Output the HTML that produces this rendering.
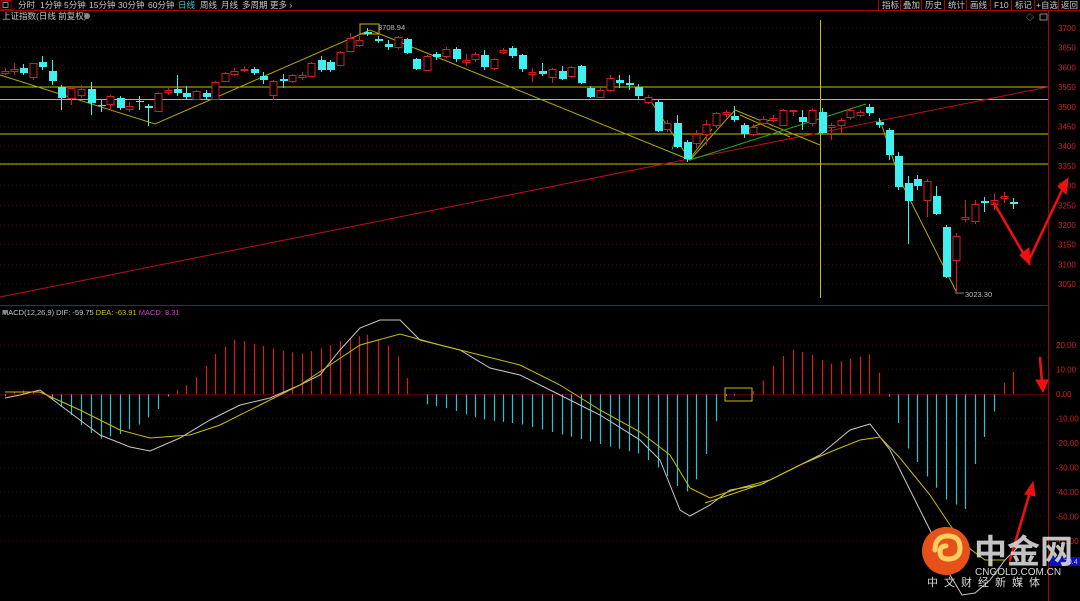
<!DOCTYPE html>
<html><head><meta charset="utf-8">
<style>
html,body{margin:0;padding:0;background:#000;width:1080px;height:601px;overflow:hidden;font-family:"Liberation Sans","Noto Sans CJK SC",sans-serif}
svg{position:absolute;left:0;top:0}
</style></head><body>
<svg id="s" width="1080" height="601" viewBox="0 0 1080 601" xmlns="http://www.w3.org/2000/svg" font-family="Liberation Sans, Noto Sans CJK SC, sans-serif">
<rect width="1080" height="601" fill="#000"/>
<!-- top bar -->
<line x1="0" y1="10.5" x2="1080" y2="10.5" stroke="#a00" stroke-width="1"/>
<rect x="1" y="0.5" width="10" height="9" fill="none" stroke="#a00"/>
<rect x="3" y="2.5" width="5" height="5" fill="none" stroke="#aaa" stroke-width="0.8"/>
<g font-size="8.5" fill="#c8c8c8">
<text x="18" y="8">分时</text><text x="40" y="8">1分钟</text><text x="64" y="8">5分钟</text><text x="89" y="8">15分钟</text><text x="118" y="8">30分钟</text><text x="148" y="8">60分钟</text>
<text x="178" y="8" fill="#33d0e0">日线</text><text x="200" y="8">周线</text><text x="221" y="8">月线</text><text x="242" y="8">多周期</text><text x="270" y="8">更多 ›</text>
<text x="882" y="8">指标</text><text x="903" y="8">叠加</text><text x="925" y="8">历史</text><text x="948" y="8">统计</text><text x="970" y="8">画线</text><text x="994" y="8">F10</text><text x="1015" y="8">标记</text><text x="1036" y="8">+自选</text><text x="1061" y="8">返回</text>
</g>
<g stroke="#a00"><line x1="878.5" y1="0" x2="878.5" y2="10"/><line x1="900.5" y1="0" x2="900.5" y2="10"/><line x1="921.5" y1="0" x2="921.5" y2="10"/><line x1="944.5" y1="0" x2="944.5" y2="10"/><line x1="966.5" y1="0" x2="966.5" y2="10"/><line x1="990.5" y1="0" x2="990.5" y2="10"/><line x1="1011.5" y1="0" x2="1011.5" y2="10"/><line x1="1034.5" y1="0" x2="1034.5" y2="10"/><line x1="1058.5" y1="0" x2="1058.5" y2="10"/></g>
<text x="2" y="19" font-size="8.5" fill="#c8c8c8">上证指数(日线 前复权)</text>
<circle cx="87" cy="16" r="3" fill="#888"/>
<text x="1026" y="20" font-size="8" fill="#aaa">◇</text>
<rect x="1040" y="14" width="7" height="6" fill="none" stroke="#aaa" stroke-width="0.8"/>
<!-- right axis -->
<line x1="1048.5" y1="10" x2="1048.5" y2="601" stroke="#a00"/>
<line x1="0" y1="305.5" x2="1048" y2="305.5" stroke="#a00"/>
<g id="grid"></g>
<g id="axis" font-size="8" fill="#d02020"></g>
<!-- horizontal yellow lines -->
<g stroke="#c8c000" stroke-width="1">
<line x1="0" y1="87" x2="1048" y2="87"/><line x1="0" y1="99.5" x2="1048" y2="99.5"/><line x1="0" y1="134" x2="1048" y2="134"/><line x1="0" y1="164" x2="1048" y2="164"/>
<line x1="820.5" y1="20" x2="820.5" y2="298"/>
</g>
<line x1="0" y1="297" x2="1048" y2="87" stroke="#c01010" stroke-width="1"/>
<g stroke="#b0a800" stroke-width="1" fill="none">
<polyline points="0,75 155,124 370,30 690,160"/>
<polyline points="650,100 690,160 735,110 820,145"/>
<polyline points="740,115 790,137"/><polyline points="745,130 770,120"/>
<polyline points="880,120 900,180 957,293"/>
<polyline points="689,160 712,129"/>
</g>
<line x1="690" y1="160" x2="866" y2="104" stroke="#20b020" stroke-width="1"/>
<line x1="680" y1="125" x2="672" y2="150" stroke="#20b020"/>
<rect x="360" y="24" width="19" height="10" fill="none" stroke="#c8c000"/>
<text x="378" y="30" font-size="7.5" fill="#bbb">3708.94</text>
<text x="965" y="297" font-size="7.5" fill="#bbb">3023.30</text>
<line x1="955" y1="293" x2="964" y2="293" stroke="#bbb" stroke-width="0.7"/>
<g id="candles"></g>
<!-- MACD -->
<text x="2" y="315" font-size="7.5" fill="#c8c8c8">MACD(12,26,9)  DIF: -59.75 <tspan fill="#d0c800">DEA: -63.91</tspan> <tspan fill="#d040d0">MACD: 8.31</tspan></text>
<circle cx="5" cy="312" r="2" fill="#888"/>
<g id="bars"></g>
<line x1="0" y1="394.5" x2="1048" y2="394.5" stroke="#a00" stroke-width="0.6"/>
<rect x="725" y="388" width="27" height="13" fill="none" stroke="#c8c000"/>
<polyline fill="none" stroke="#c8c8c8" stroke-width="1" points="5,398 20,395 40,390 60,405 80,420 100,435 130,447 150,451 180,438 210,420 240,405 270,398 300,385 320,375 340,350 360,328 380,320 400,320 420,340 440,345 460,350 490,368 520,375 560,395 600,415 640,440 660,460 680,510 690,516 710,505 730,490 760,485 790,470 820,455 850,430 870,424 890,450 910,490 930,530 950,575 962,595 975,593 990,580 1005,560 1020,545"/>
<polyline fill="none" stroke="#c8c000" stroke-width="1" points="5,392 40,392 80,410 120,430 150,438 190,435 220,425 260,405 300,385 330,365 360,345 400,334 440,345 480,355 520,365 560,385 600,410 640,432 670,455 690,488 710,498 740,488 770,480 800,465 830,452 860,440 880,437 900,458 930,495 950,525 965,545 985,560 1005,560"/>
<line x1="705" y1="503" x2="765" y2="483" stroke="#c8c000"/>
<!-- red annotation arrows -->
<g fill="#f01010" stroke="#f01010" stroke-width="2.5" stroke-linecap="round">
<line x1="994" y1="203" x2="1026" y2="258"/><line x1="1029" y1="260" x2="1062" y2="190"/>
<polygon points="1020,255 1030,265 1029,248" stroke-width="1"/>
<polygon points="1058,186 1068,178 1066,194" stroke-width="1"/>
<line x1="1040" y1="358" x2="1042" y2="383"/><polygon points="1036,380 1048,380 1043,392" stroke-width="1"/>
<line x1="1010" y1="560" x2="1030" y2="492"/><polygon points="1025,494 1035,496 1033,482" stroke-width="1"/>
</g>
<rect x="1050" y="557" width="30" height="9" fill="#1010c0"/>
<text x="1064" y="564" font-size="7" fill="#ccc">70.4</text>
<!-- logo -->
<circle cx="946" cy="551" r="24" fill="#e8501a"/>
<path d="M935,550 q0,-14 13,-14 q12,0 12,12 q0,11 -12,11 q-8,0 -8,-7 q0,-6 6,-6" fill="none" stroke="#ffd060" stroke-width="5" stroke-linecap="round"/>
<text x="974" y="563" font-size="33" font-weight="bold" fill="#d8d8d8" fill-opacity="0.9">中金网</text>
<text x="975" y="575" font-size="10" fill="#d8d8d8">CNGOLD.COM.CN</text>
<text x="927" y="586" font-size="11" fill="#d8d8d8" letter-spacing="6">中文财经新媒体</text>
</svg>
<script>
var NS="http://www.w3.org/2000/svg";
function el(p,t,a){var e=document.createElementNS(NS,t);for(var k in a)e.setAttribute(k,a[k]);p.appendChild(e);return e;}
var g=document.getElementById('grid'),ax=document.getElementById('axis');
var prices=[3700,3650,3600,3550,3500,3450,3400,3350,3300,3250,3200,3150,3100,3050];
prices.forEach(function(p){var y=28+(3700-p)*0.394;
el(g,'line',{x1:0,y1:y,x2:1048,y2:y,stroke:'#6a0000','stroke-dasharray':'1,3','stroke-width':0.8});
el(ax,'text',{x:1058,y:y+3}).textContent=p;});
[20,10,0,-10,-20,-30,-40,-50,-60].forEach(function(v){var y=394-v*2.45;
if(v!=0)el(g,'line',{x1:0,y1:y,x2:1048,y2:y,stroke:'#6a0000','stroke-dasharray':'1,3','stroke-width':0.8});
el(ax,'text',{x:1056,y:y+3}).textContent=v.toFixed(2);});
// candles: x, top, bottom, high, low, color(r/c)
var C=[[5,71,73,68,75,'r'],[14,69,71,63,75,'r'],[23,68,73,64,75,'c'],[33,63,77,63,80,'r'],[42,62,67,56,70,'c'],[52,71,81,60,85,'c'],[61,87,98,85,110,'c'],[71,88,98,86,105,'r'],[81,89,95,85,98,'r'],[91,89,103,82,115,'c'],[101,105,106,100,112,'c'],[110,96,104,95,110,'r'],[120,98,108,96,110,'c'],[129,106,109,102,112,'r'],[139,101,102,96,110,'c'],[148,106,108,104,126,'c'],[158,93,111,92,112,'r'],[168,90,92,88,95,'r'],[177,89,93,75,96,'c'],[186,93,97,86,99,'c'],[196,91,99,90,100,'r'],[206,93,97,90,100,'c'],[215,82,99,81,100,'r'],[225,73,81,72,82,'r'],[234,71,74,68,76,'r'],[244,69,70,66,72,'r'],[254,69,73,67,75,'c'],[263,76,80,72,84,'c'],[273,81,95,80,100,'r'],[283,79,81,74,88,'c'],[292,75,81,74,83,'r'],[302,75,77,72,80,'r'],[311,63,76,62,77,'r'],[321,60,70,56,72,'c'],[330,62,70,60,72,'c'],[340,52,65,51,66,'r'],[350,38,51,33,52,'r'],[359,40,45,36,47,'r'],[367,32,34,28,36,'c'],[378,39,41,36,43,'c'],[388,44,47,40,50,'c'],[398,37,47,36,49,'r'],[407,39,53,38,54,'c'],[416,59,69,58,70,'c'],[427,56,70,55,71,'r'],[436,54,57,52,60,'c'],[446,49,56,47,58,'r'],[456,49,59,47,62,'c'],[466,60,62,54,66,'r'],[475,54,59,52,62,'r'],[484,55,67,50,70,'c'],[494,59,68,58,70,'r'],[503,50,52,48,54,'r'],[512,48,56,46,58,'c'],[522,55,69,54,72,'c'],[532,72,74,68,82,'r'],[542,71,74,63,76,'c'],[552,69,77,68,83,'r'],[562,71,79,66,80,'c'],[571,67,76,66,78,'r'],[581,66,83,65,84,'c'],[590,88,97,86,98,'c'],[600,90,97,88,98,'r'],[610,78,90,75,92,'r'],[619,80,83,75,88,'c'],[629,83,85,75,90,'c'],[638,87,96,84,99,'c'],[648,97,102,95,104,'r'],[658,102,131,100,132,'c'],[667,123,129,120,132,'r'],[677,123,147,115,148,'c'],[687,142,159,140,162,'c'],[696,134,143,130,148,'r'],[706,124,134,120,145,'r'],[716,113,125,112,128,'r'],[726,112,114,110,118,'r'],[734,116,120,106,122,'c'],[744,125,134,123,138,'c'],[753,127,134,124,136,'r'],[763,119,123,116,126,'r'],[773,118,120,115,122,'r'],[783,110,125,109,126,'r'],[793,110,111,110,116,'r'],[802,117,122,110,130,'c'],[812,110,123,108,126,'r'],[822,112,133,108,134,'c'],[831,125,127,123,140,'r'],[841,120,125,118,135,'r'],[850,110,117,108,120,'r'],[860,112,115,110,117,'r'],[869,107,113,104,116,'c'],[879,122,125,118,128,'c'],[889,130,155,128,160,'c'],[898,156,187,152,190,'c'],[908,183,201,176,244,'c'],[917,179,186,175,190,'c'],[927,181,200,179,217,'r'],[936,196,214,186,215,'c'],[946,227,277,225,278,'c'],[956,236,260,233,293,'r'],[965,217,219,200,222,'r'],[975,204,221,200,224,'r'],[984,201,203,197,212,'c'],[994,200,204,193,210,'r'],[1004,196,198,192,203,'r'],[1013,202,204,198,209,'c']];
var cg=document.getElementById('candles');
C.forEach(function(c){var col=c[5]=='r'?'#d02020':'#40f0f0';var x=c[0];
el(cg,'line',{x1:x+0.5,y1:c[3],x2:x+0.5,y2:c[4],stroke:col,'stroke-width':1});
var h=Math.max(1,c[2]-c[1]);
if(c[5]=='r'){el(cg,'rect',{x:x-3,y:c[1]+0.5,width:7,height:h,fill:'#000',stroke:col,'stroke-width':1});}
else el(cg,'rect',{x:x-3,y:c[1],width:8,height:h,fill:col});});
// MACD histogram envelope (x, value in px offset from 394; negative=up)
var E=[[0,4],[20,-4],[40,-3],[55,8],[70,20],[85,35],[100,45],[120,40],[140,30],[158,15],[170,0],[185,-8],[200,-20],[215,-40],[235,-55],[255,-50],[275,-45],[300,-40],[320,-45],[345,-55],[370,-60],[385,-50],[395,-45],[405,-20],[415,0],[425,10],[450,15],[480,25],[520,30],[560,40],[600,50],[640,60],[660,75],[685,100],[700,80],[715,30],[725,2],[745,1],[758,-5],[770,-25],[790,-45],[810,-40],[830,-30],[850,-35],[870,-40],[882,-15],[890,5],[905,50],[925,80],[945,105],[965,115],[975,70],[985,40],[995,15],[1003,-10],[1013,-22],[1020,-5]];
function env(x){for(var i=0;i<E.length-1;i++){if(x>=E[i][0]&&x<=E[i+1][0]){var t=(x-E[i][0])/(E[i+1][0]-E[i][0]);return E[i][1]+t*(E[i+1][1]-E[i][1]);}}return 0;}
var bg=document.getElementById('bars');
C.forEach(function(c){var x=c[0]+0.5;var v=env(c[0]);if(Math.abs(v)<1.5)return;
el(bg,'line',{x1:x,y1:394,x2:x,y2:394+v,stroke:v>0?'#30c0d0':'#d02020','stroke-width':1.2});});
</script>
</body></html>
